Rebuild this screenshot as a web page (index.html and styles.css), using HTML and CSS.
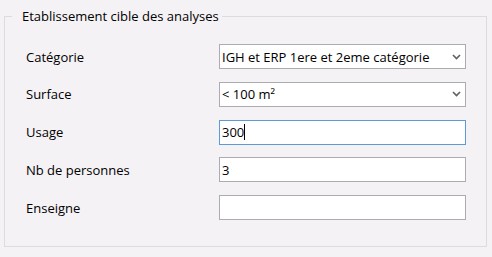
FILE: index.html
```html
<!DOCTYPE html>
<html lang="fr">
<head>
<meta charset="utf-8">
<title>Etablissement cible des analyses</title>
<link rel="stylesheet" href="styles.css">
</head>
<body>
<fieldset class="group">
  <legend class="group-title">Etablissement cible des analyses</legend>
  <div class="form">
    <div class="label">Catégorie</div>
    <div class="field combo"><span class="value">IGH et ERP 1ere et 2eme catégorie</span><svg class="chevron" width="9" height="6" viewBox="0 0 9 6"><path d="M1 1 L4.5 4.5 L8 1" fill="none" stroke="#606060" stroke-width="1.6"/></svg></div>

    <div class="label">Surface</div>
    <div class="field combo"><span class="value">&lt; 100 m²</span><svg class="chevron" width="9" height="6" viewBox="0 0 9 6"><path d="M1 1 L4.5 4.5 L8 1" fill="none" stroke="#606060" stroke-width="1.6"/></svg></div>

    <div class="label">Usage</div>
    <div class="field focused"><span class="value">300</span><span class="caret"></span></div>

    <div class="label">Nb de personnes</div>
    <div class="field"><span class="value">3</span></div>

    <div class="label">Enseigne</div>
    <div class="field"></div>
  </div>
</fieldset>
</body>
</html>
```

FILE: styles.css
```css
html, body {
  margin: 0;
  padding: 0;
  background: #f5f2f5;
}
body {
  font-family: "Open Sans", "Noto Sans", sans-serif;
  font-size: 13px;
  color: #000;
  padding: 8px 5px 0 4px;
  width: 483px;
  box-sizing: content-box;
}
.group {
  margin: 0;
  padding: 0 0 26px 0;
  border: 1px solid #dcdcdc;
  width: 483px;
  box-sizing: border-box;
  min-width: 0;
}
.group-title {
  margin-left: 7px;
  padding: 0 3px 0 10px;
  line-height: 17px;
  font-size: 13px;
}
.form {
  display: grid;
  grid-template-columns: 193px 247px;
  row-gap: 12.75px;
  padding: 19px 0 0 21px;
}
.label {
  display: flex;
  align-items: center;
  height: 25px;
}
.field {
  height: 25px;
  box-sizing: border-box;
  border: 1px solid #acabb0;
  background: #fff;
  display: flex;
  align-items: center;
  padding: 0 2px;
}
.field.focused {
  border-color: #5c9bd6;
}
.value {
  white-space: nowrap;
}
.combo {
  justify-content: space-between;
  padding-right: 4px;
}
.chevron {
  flex: none;
}
.caret {
  width: 1px;
  height: 16px;
  background: #000;
}
```
